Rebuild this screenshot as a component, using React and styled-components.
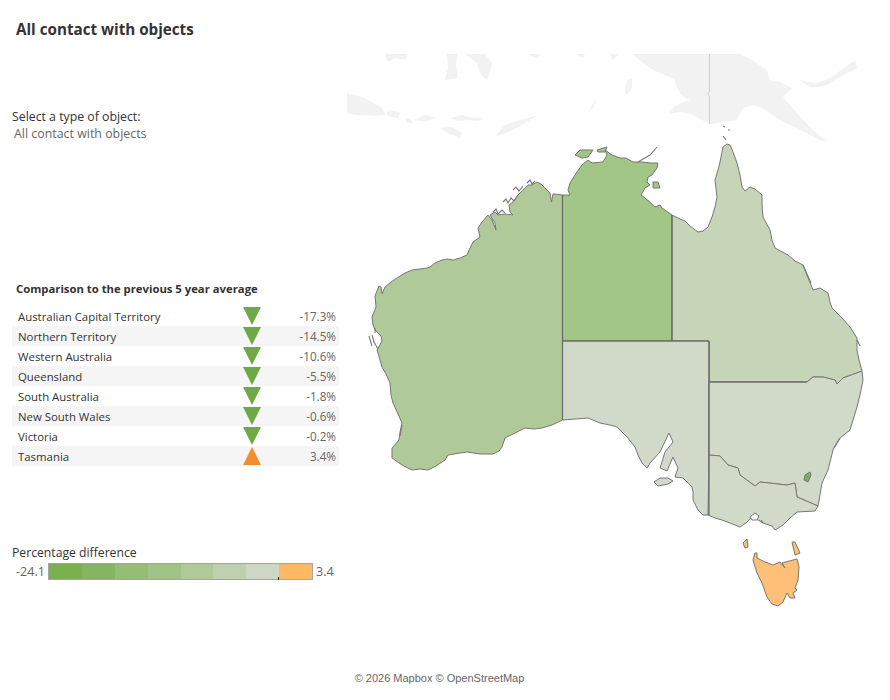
import React from "react";
import styled, { createGlobalStyle } from "styled-components";

const comparison = [
    ["Australian Capital Territory", "-17.3%", "down"],
    ["Northern Territory", "-14.5%", "down"],
    ["Western Australia", "-10.6%", "down"],
    ["Queensland", "-5.5%", "down"],
    ["South Australia", "-1.8%", "down"],
    ["New South Wales", "-0.6%", "down"],
    ["Victoria", "-0.2%", "down"],
    ["Tasmania", "3.4%", "up"],
];

const legendColors = ["#7bb04e", "#86b560", "#95bd74", "#a0c385", "#afca98", "#bfd0ae", "#ced6c4", "#feb964"];

// map shapes, in page pixels
const land = [
    "347,93 355,95 362,97 368,100 375,104 382,108 385,115 375,116 365,115 355,115 347,113",
    "387,112 394,111 400,113 398,118 392,117 387,115",
    "405,119 410,118 413,123 407,123",
    "413,120 425,115 435,118 425,122",
    "450,118 462,115 475,118 485,118 477,121 467,120 458,121",
    "440,128 452,127 462,133 460,138 448,133",
    "495,137 505,125 520,120 538,115 530,120 522,125 508,132",
    "385,54 408,54 405,60 395,58 388,62",
    "447,54 457,54 456,66 458,78 450,79 445,80 448,68",
    "465,54 485,54 492,63 490,72 487,80 482,76 480,73 477,63",
    "527,54 542,54 535,58",
    "575,54 585,54 583,58",
    "590,108 597,98 593,108 588,112",
    "632,54 740,54 752,60 767,70 770,80 780,82 792,88 783,97 790,105 797,113 805,122 813,130 827,142 818,139 810,135 797,128 783,122 770,113 762,108 753,105 743,108 737,120 725,122 710,124 700,119 693,115 682,112 670,113 674,107 680,103 690,100 684,97 680,93 676,86 675,80 665,75 653,70 642,62",
    "610,54 620,54 612,60",
    "627,80 632,78 632,88 627,95 625,92",
    "798,79 808,82 817,83 828,79 837,73 848,65 855,60 857,68 850,72 843,75 835,80 827,85 818,87 810,87",
];

const shapes = [
    {
        fill: "#afca98",
        points: "562.5,195 553,194 551.5,202 550,193 545,188 541,184 537,182 532,185 528,185 523,190 518,195 513,202 509,205 510,212 513,215 505,214 498,215 495,212 490,215 495,223 496,230 492,220 488,215 482,222 478,228 480,237 473,242 470,248 467,255 460,258 453,260 447,259 442,260 435,263 430,267 427,268 420,269 412,270 405,273 397,278 391,282 385,287 382,294 381,287 379,286 375,296 376,307 372,317 373,325 375,330 381,336 382,341 377,350 380,360 382,367 386,374 390,383 391,395 393,403 398,414 402,423 400,432 399,440 392,448 392,458 402,465 412,470 420,469 428,470 436,466 445,460 448,455 460,453 467,452 480,454 493,454 499,451 502,447 505,438 515,433 525,428 534,429 542,428 552,425 562.5,420",
    },
    {
        fill: "#a2c685",
        points: "562.5,195 570,195 568,190 570,183 577,172 582,165 588,160 592,163 603,162 607,155 605,150 612,155 620,158 626,158 633,162 642,162 650,163 658,163 657,168 652,175 648,177 647,182 650,185 645,188 641,195 650,202 655,207 660,205 662,208 672,215 672,341 562.5,341",
    },
    {
        fill: "#c6d5b8",
        points: "672,215 680,219 685,221 690,226 698,232 703,231 708,227 712,217 715,207 717,197 715,180 718,170 720,162 723,147 727,144 730,145 733,152 737,163 740,175 742,187 745,191 750,187 755,189 762,195 762,205 763,217 770,230 772,240 775,248 788,255 795,261 803,265 807,275 813,290 820,288 828,293 830,302 832,308 842,318 850,327 857,338 857,350 859,360 862,371 843,378 837,384 835,380 823,377 813,377 807,382 709,382 709,341 672,341",
    },
    {
        fill: "#d1d9c9",
        points: "562.5,341 709,341 709,515 703,515 698,510 693,500 693,492 692,487 683,478 675,477 678,468 673,457 667,471 660,468 665,452 673,442 669,433 660,452 650,463 647,468 642,463 638,455 635,447 627,437 617,427 610,425 600,423 588,418 575,419 562.5,420",
    },
    {
        fill: "#d1d9c9",
        points: "709,382 807,382 813,377 823,377 835,380 837,384 843,378 862,371 863,380 860,395 857,407 853,420 850,430 840,438 833,450 828,470 822,483 818,506 797,497 795,483 787,485 760,482 755,486 740,475 738,468 728,465 720,456 709,455",
    },
    {
        fill: "#d1d9c9",
        points: "709,455 720,456 728,465 738,468 740,475 755,486 760,482 787,485 795,483 797,497 818,506 815,511 797,512 790,518 783,525 775,530 772,526 763,523 758,520 752,517 746,523 740,527 730,523 722,520 715,518 708,515",
    },
    { fill: "#d1d9c9", points: "654,482 660,478 668,478 673,481 668,484 658,486" },
    { fill: "#ffffff", points: "750,517 755,513 759,516 757,520 752,520" },
    { fill: "#7cb151", points: "805,475 810,472 811,475 808,482 804,480" },
    {
        fill: "#fec078",
        points: "753,560 755,553 757,553 757,558 765,562 773,565 780,562 785,568 782,563 797,559 799,567 798,580 795,588 797,590 793,593 795,598 790,598 787,593 783,602 778,606 772,604 767,597 762,583 757,573",
    },
    { fill: "#fec078", points: "743,543 747,539 748,547 745,548" },
    { fill: "#fec078", points: "792,542 795,542 800,553 795,555" },
    { fill: "#a2c685", points: "575,155 580,150 593,150 588,157 582,158" },
    { fill: "#a2c685", points: "597,150 607,147 605,152 598,152" },
    { fill: "#a2c685", points: "653,182 658,182 660,188 653,188" },
];

// dark islets and reefs along the coast
const reefs = [
    "503,202 506,199 508,203 511,198 514,201 518,195",
    "513,190 516,187 519,191 523,186",
    "527,183 530,180 532,184 535,181",
    "493,212 496,209 498,214 502,210 505,213",
    "638,162 650,155 657,147",
    "372,335 374,342 378,349",
    "369,336 372,346",
    "375,328 375,333",
    "723,126 725,127",
    "728,130 730,130",
    "723,136 726,140",
    "803,265 806,272 811,283",
    "840,438 834,448",
    "761,520 763,523",
    "857,340 860,346",
    "402,425 400,436",
];

const innerLines = [
    "562.5,195 562.5,420",
    "562.5,341 709,341",
    "672,215 672,341",
    "709,341 709,515",
    "709,382 807,382",
];

function AustraliaMap() {
    return (
        <MapSvg viewBox="345 54 545 610" role="img">
            <SoftLand>
                {land.map((points) => (
                    <polygon key={points} points={points} fill="#f2f2f2" />
                ))}
            </SoftLand>
            <polyline points="709.5,54 709.5,91 708,94 709.5,97 709.5,124" fill="none" stroke="#cfcfcf" />
            {shapes.map((shape) => (
                <polygon
                    key={shape.points}
                    points={shape.points}
                    fill={shape.fill}
                    stroke="#767676"
                    strokeWidth="1"
                    strokeLinejoin="round"
                />
            ))}
            {reefs.map((points) => (
                <polyline key={points} points={points} fill="none" stroke="#777777" strokeWidth="1.1" />
            ))}
            {innerLines.map((points) => (
                <polyline key={points} points={points} fill="none" stroke="#686868" strokeWidth="1.2" />
            ))}
        </MapSvg>
    );
}

export default function App() {
    return (
        <>
            <GlobalStyle />
            <Page>
                <Main>
                    <Side>
                        <Title>All contact with objects</Title>
                        <FilterLabel>Select a type of object:</FilterLabel>
                        <FilterValue>All contact with objects</FilterValue>
                        <TableTitle>Comparison to the previous 5 year average</TableTitle>
                        <Table>
                            {comparison.map(([name, value, dir], i) => (
                                <Row key={name} $shaded={i % 2 === 1}>
                                    <RowName>{name}</RowName>
                                    <Marker>
                                        <Triangle $dir={dir} />
                                    </Marker>
                                    <RowValue>{value}</RowValue>
                                </Row>
                            ))}
                        </Table>
                        <LegendLabel>Percentage difference</LegendLabel>
                        <Legend>
                            <LegendMin>-24.1</LegendMin>
                            <LegendBar>
                                {legendColors.map((color) => (
                                    <LegendStep key={color} $color={color} />
                                ))}
                                <LegendTick />
                            </LegendBar>
                            <LegendMax>3.4</LegendMax>
                        </Legend>
                    </Side>
                    <MapArea>
                        <AustraliaMap />
                    </MapArea>
                </Main>
                <Attribution>© 2026 Mapbox © OpenStreetMap</Attribution>
            </Page>
        </>
    );
}

const GlobalStyle = createGlobalStyle`
    html, body {
        margin: 0;
        background: #ffffff;
    }
    body {
        font-family: "Open Sans", sans-serif;
    }
`;

const Page = styled.div`
    width: 890px;
    height: 700px;
    overflow: hidden;
`;

const Main = styled.div`
    display: flex;
    height: 664px;
`;

const Side = styled.div`
    width: 345px;
    flex-shrink: 0;
    padding-left: 12px;
    box-sizing: border-box;
`;

const Title = styled.h1`
    margin: 19px 0 0 4px;
    font-size: 15.2px;
    line-height: 20px;
    font-weight: 700;
    color: #333333;
`;

const FilterLabel = styled.div`
    margin-top: 68px;
    font-size: 12.3px;
    line-height: 20px;
    color: #333333;
`;

const FilterValue = styled.div`
    margin-left: 2px;
    font-size: 12.4px;
    line-height: 14px;
    color: #666666;
`;

const TableTitle = styled.div`
    margin: 140px 0 0 4px;
    font-size: 11.3px;
    line-height: 16px;
    font-weight: 700;
    color: #333333;
`;

const Table = styled.div`
    width: 327px;
    margin-top: 9px;
`;

const Row = styled.div`
    height: 20px;
    display: grid;
    grid-template-columns: 216px 36px 1fr;
    align-items: center;
    padding: 0 3px 0 6px;
    box-sizing: border-box;
    background: ${(p) => (p.$shaded ? "#f5f5f5" : "transparent")};
`;

const RowName = styled.span`
    font-size: 11.4px;
    color: #333333;
`;

const Marker = styled.span`
    display: flex;
    justify-content: center;
`;

const Triangle = styled.span`
    width: 0;
    height: 0;
    border-left: 9px solid transparent;
    border-right: 9px solid transparent;
    border-top: ${(p) => (p.$dir === "down" ? "18px solid #6fa945" : "none")};
    border-bottom: ${(p) => (p.$dir === "up" ? "18px solid #f28e2b" : "none")};
`;

const RowValue = styled.span`
    font-size: 11.7px;
    text-align: right;
    color: #666666;
`;

const LegendLabel = styled.div`
    margin-top: 78px;
    font-size: 12.2px;
    line-height: 18px;
    color: #333333;
`;

const Legend = styled.div`
    display: flex;
    align-items: center;
    margin-top: 1px;
`;

const LegendMin = styled.span`
    width: 33px;
    box-sizing: border-box;
    text-align: right;
    font-size: 12.6px;
    color: #666666;
`;

const LegendBar = styled.div`
    position: relative;
    width: 265px;
    height: 17px;
    box-sizing: border-box;
    border: 1.5px solid #a8a59b;
    display: flex;
    margin-left: 3px;
`;

const LegendStep = styled.div`
    flex: 1;
    background: ${(p) => p.$color};
`;

const LegendTick = styled.div`
    position: absolute;
    left: 229px;
    bottom: -1px;
    width: 1px;
    height: 3px;
    background: #222222;
`;

const LegendMax = styled.span`
    margin-left: 3px;
    font-size: 12.6px;
    color: #666666;
`;

const MapArea = styled.div`
    flex: 1;
    padding-top: 54px;
`;

const MapSvg = styled.svg`
    display: block;
    width: 545px;
    height: 610px;
`;

const SoftLand = styled.g`
    filter: blur(0.5px);
`;

const Attribution = styled.div`
    margin-top: 8px;
    padding-right: 11px;
    text-align: center;
    font-family: "Liberation Sans", Arial, sans-serif;
    font-size: 11px;
    color: #666666;
`;
